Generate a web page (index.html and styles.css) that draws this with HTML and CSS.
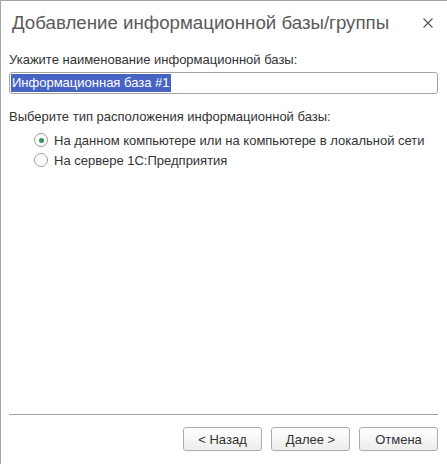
FILE: index.html
```html
<!DOCTYPE html>
<html lang="ru">
<head>
<meta charset="utf-8">
<title>Добавление информационной базы/группы</title>
<link rel="stylesheet" href="styles.css">
</head>
<body>
<div class="window">
  <div class="titlebar">
    <span class="title">Добавление информационной базы/группы</span>
    <span class="close">
      <svg width="10" height="10" viewBox="0 0 10 10"><path d="M0.5 0.5 L9.5 9.5 M9.5 0.5 L0.5 9.5" stroke="#555" stroke-width="1.1" fill="none"/></svg>
    </span>
  </div>
  <div class="content">
    <div class="label first">Укажите наименование информационной базы:</div>
    <div class="input"><span class="sel">Информационная база #1</span></div>
    <div class="label second">Выберите тип расположения информационной базы:</div>
    <div class="radios">
      <div class="radio-row"><span class="radio checked"></span><span class="rlabel">На данном компьютере или на компьютере в локальной сети</span></div>
      <div class="radio-row"><span class="radio"></span><span class="rlabel">На сервере 1С:Предприятия</span></div>
    </div>
  </div>
  <div class="footer">
    <div class="sep"></div>
    <div class="buttons">
      <button class="btn">&lt; Назад</button>
      <button class="btn">Далее &gt;</button>
      <button class="btn">Отмена</button>
    </div>
  </div>
</div>
</body>
</html>
```
FILE: styles.css
```css
html, body {
  margin: 0;
  padding: 0;
  background: #fff;
}
body {
  font-family: "Liberation Sans", Arial, sans-serif;
  font-size: 13px;
  color: #333;
}
.window {
  box-sizing: border-box;
  width: 447px;
  height: 464px;
  border-left: 1px solid #a5a5a5;
  border-top: 1px solid #a5a5a5;
  display: flex;
  flex-direction: column;
}
.titlebar {
  height: 43px;
  display: flex;
  align-items: center;
  padding-left: 11px;
  padding-right: 14px;
}
.title {
  flex: 1;
  font-size: 18.7px;
  color: #5a5a5a;
  line-height: 20px;
  padding-top: 1px;
}
.close {
  display: flex;
  width: 10px;
  height: 10px;
  margin-top: 1px;
}
.content {
  flex: 1;
  padding: 0 9px 0 8px;
}
.label {
  line-height: 16px;
  height: 16px;
}
.label.first {
  margin-top: 8px;
}
.input {
  box-sizing: border-box;
  margin-top: 4px;
  height: 22px;
  border: 1px solid #a3a3a3;
  border-radius: 3px;
  padding: 1px 1px;
  display: flex;
  align-items: stretch;
}
.sel {
  background: #4763c4;
  color: #fff;
  line-height: 18px;
  padding: 0 1px 0 1px;
}
.label.second {
  margin-top: 15px;
}
.radios {
  margin-top: 5px;
  padding-left: 25px;
}
.radio-row {
  height: 20px;
  display: flex;
  align-items: center;
}
.radio {
  box-sizing: border-box;
  width: 14px;
  height: 14px;
  border: 1px solid #9a9a9a;
  border-radius: 50%;
  background: #fff;
  display: flex;
  align-items: center;
  justify-content: center;
  margin-right: 6px;
}
.radio.checked::after {
  content: "";
  width: 5px;
  height: 5px;
  border-radius: 50%;
  background: #2b9a57;
}
.footer {
  padding: 0 9px 13px 8px;
}
.sep {
  height: 1px;
  background: #a3a3a3;
}
.buttons {
  margin-top: 12px;
  display: flex;
  justify-content: flex-end;
  gap: 9px;
}
.btn {
  box-sizing: border-box;
  width: 79px;
  height: 24px;
  border: 1px solid #acacac;
  border-radius: 3px;
  background: linear-gradient(#ffffff, #ededed);
  font-family: "Liberation Sans", Arial, sans-serif;
  font-size: 13px;
  color: #333;
  padding: 0;
}
```
